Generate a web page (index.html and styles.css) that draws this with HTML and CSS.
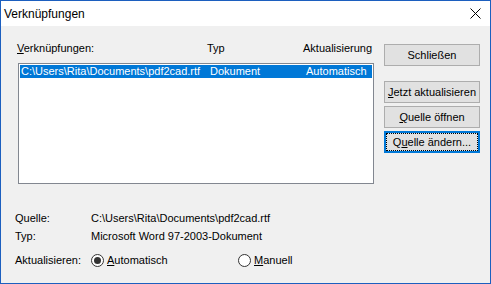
FILE: index.html
```html
<!DOCTYPE html>
<html lang="de">
<head>
  <meta charset="UTF-8">
  <title>Verknüpfungen</title>
  <link rel="stylesheet" href="styles.css">
</head>
<body>
  <div class="window">
    <div class="titlebar">
      <span class="title">Verknüpfungen</span>
      <svg class="close" width="11" height="11" viewBox="0 0 11 11">
        <line x1="0.5" y1="0.5" x2="10.5" y2="10.5" stroke="#000" stroke-width="1"></line>
        <line x1="10.5" y1="0.5" x2="0.5" y2="10.5" stroke="#000" stroke-width="1"></line>
      </svg>
    </div>

    <div class="dialog">
      <div class="main">
        <div class="links">
          <div class="links-head">
            <span><u>V</u>erknüpfungen:</span>
            <span>Typ</span>
            <span>Aktualisierung</span>
          </div>
          <div class="listbox">
            <div class="row selected">
              <span>C:\Users\Rita\Documents\pdf2cad.rtf</span>
              <span>Dokument</span>
              <span>Automatisch</span>
            </div>
          </div>
        </div>

        <div class="actions">
          <button class="btn btn-close">Schließen</button>
          <button class="btn"><u>J</u>etzt aktualisieren</button>
          <button class="btn"><u>Q</u>uelle öffnen</button>
          <button class="btn focused">Q<u>u</u>elle ändern...</button>
        </div>
      </div>

      <div class="info">
        <div class="info-row">
          <span class="info-label">Quelle:</span>
          <span>C:\Users\Rita\Documents\pdf2cad.rtf</span>
        </div>
        <div class="info-row">
          <span class="info-label">Typ:</span>
          <span>Microsoft Word 97-2003-Dokument</span>
        </div>
        <div class="info-row update">
          <span class="info-label">Aktualisieren:</span>
          <label class="radio auto"><span class="dot checked"></span><span><u>A</u>utomatisch</span></label>
          <label class="radio"><span class="dot"></span><span><u>M</u>anuell</span></label>
        </div>
      </div>
    </div>
  </div>
</body>
</html>
```

FILE: styles.css
```css
* {
  margin: 0;
  padding: 0;
  box-sizing: border-box;
}

:root {
  --win-border: #1c5fbf;
  --face: #f0f0f0;
  --btn-face: #e1e1e1;
  --btn-border: #adadad;
  --accent: #0078d7;
  --list-border: #828790;
}

body {
  width: 491px;
  height: 284px;
  font-family: "Liberation Sans", Arial, sans-serif;
  font-size: 11px;
  color: #000;
  background: var(--face);
  overflow: hidden;
}

u {
  text-decoration: underline;
  text-underline-offset: 1px;
}

.window {
  width: 491px;
  height: 284px;
  border: 1px solid var(--win-border);
  display: flex;
  flex-direction: column;
  background: var(--face);
}

/* Title bar */
.titlebar {
  height: 25px;
  background: #fff;
  display: flex;
  align-items: center;
  justify-content: space-between;
  padding: 0 9px 0 3px;
}

.title {
  font-size: 12px;
}

.close {
  display: block;
}

/* Links list + buttons */
.main {
  display: flex;
  padding-left: 16px;
}

.links {
  padding-top: 16px;
  width: 358px;
}

.links-head {
  display: grid;
  grid-template-columns: 190px 96px 1fr;
  line-height: 13px;
  margin-bottom: 8px;
}

.listbox {
  margin-left: 1px;
  width: 356px;
  height: 121px;
  background: #fff;
  border: 1px solid var(--list-border);
  padding: 1px;
}

.row {
  display: grid;
  grid-template-columns: 189px 96px 1fr;
  height: 13px;
  line-height: 13px;
  padding-left: 1px;
  white-space: nowrap;
}

.row.selected {
  background: var(--accent);
  color: #fff;
}

.actions {
  display: flex;
  flex-direction: column;
  gap: 3px;
  padding-top: 18px;
  margin-left: 9px;
}

.btn {
  width: 96px;
  height: 22px;
  font-family: inherit;
  font-size: 11px;
  color: #000;
  background: var(--btn-face);
  border: 1px solid var(--btn-border);
  white-space: nowrap;
}

.btn-close {
  margin-bottom: 12px;
}

.btn.focused {
  border: 2px solid var(--accent);
  outline: 1px dotted #000;
  outline-offset: -3px;
}

/* Source info */
.info {
  padding: 28px 0 0 14px;
  display: flex;
  flex-direction: column;
}

.info-row {
  display: flex;
  align-items: center;
  line-height: 13px;
  height: 13px;
  margin-bottom: 5px;
}

.info-row.update {
  height: 14px;
  margin-top: 5px;
}

.info-label {
  width: 76px;
}

.radio {
  display: flex;
  align-items: center;
  gap: 3px;
}

.radio.auto {
  width: 147px;
}

.dot {
  width: 13px;
  height: 13px;
  border: 1px solid #333;
  border-radius: 50%;
  background: #fff;
  display: flex;
  align-items: center;
  justify-content: center;
}

.dot.checked::after {
  content: "";
  width: 7px;
  height: 7px;
  border-radius: 50%;
  background: #333;
}
```
